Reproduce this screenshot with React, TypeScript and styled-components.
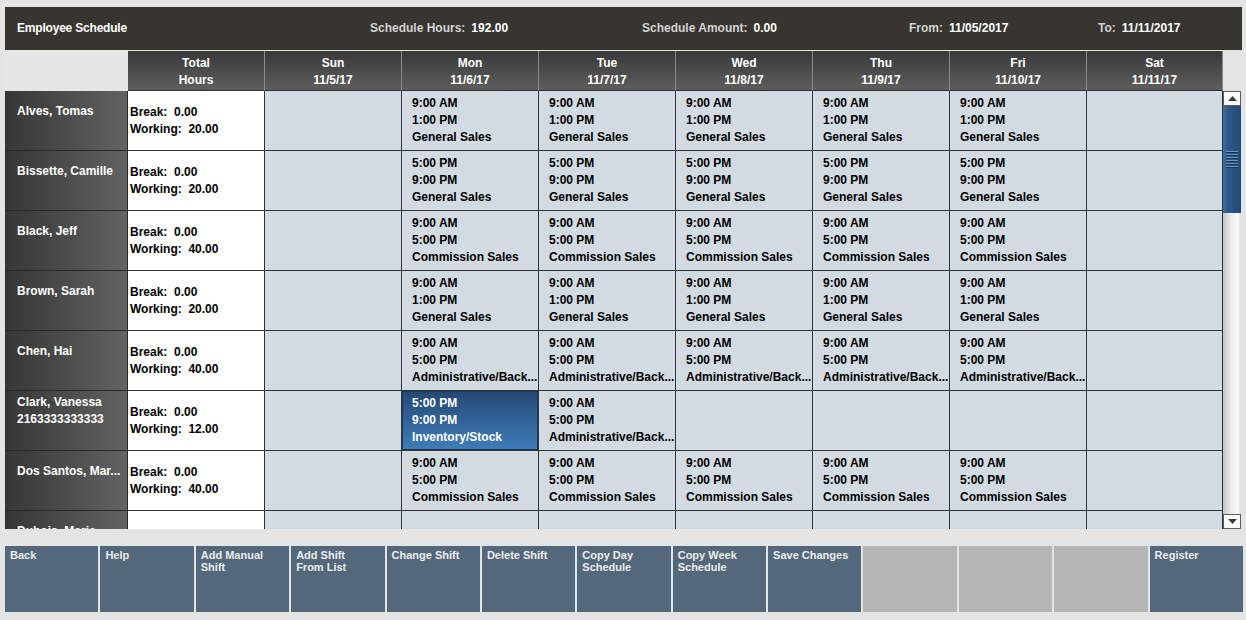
import React from "react";
import styled, { createGlobalStyle, css } from "styled-components";

const GlobalStyle = createGlobalStyle`
  html, body { margin: 0; padding: 0; background: #e4e4e4; }
  body { font-family: "Liberation Sans", Arial, sans-serif; }
  * { box-sizing: border-box; }
`;

const COLS = "123px repeat(7, 137px) 136px";

const Page = styled.div`
  width: 1246px;
  height: 620px;
  overflow: hidden;
  padding: 7px 0 0 5px;
  display: flex;
  flex-direction: column;
`;

const TopBar = styled.header`
  width: 1237px;
  height: 43px;
  flex-shrink: 0;
  background: #38342f;
  display: grid;
  grid-template-columns: 353px 272px 267px 189px 1fr;
  align-items: center;
  padding: 0 0 2px 12px;
  margin-bottom: 1px;
  color: #fff;
  font-weight: bold;
  font-size: 12px;
`;

const Title = styled.div`
  letter-spacing: -0.2px;
`;

const Stat = styled.div`
  display: flex;
  gap: 6px;
  white-space: nowrap;
`;

const StatLabel = styled.span`
  color: #d2d2d2;
`;

const StatValue = styled.span`
  color: #fff;
`;

const HeadRow = styled.div`
  display: grid;
  grid-template-columns: ${COLS};
  width: 1218px;
  height: 40px;
  flex-shrink: 0;
`;

const Corner = styled.div`
  background: #e6e6e6;
`;

const HeadCell = styled.div`
  background: linear-gradient(#393939, #5e5e5e);
  border-right: 1px solid #8a8a8a;
  border-bottom: 1px solid #2e2e2e;
  padding-top: 2px;
  color: #fff;
  font-size: 12px;
  font-weight: bold;
  line-height: 17px;
  display: flex;
  flex-direction: column;
  align-items: center;
  justify-content: center;
`;

const BodyArea = styled.div`
  display: flex;
  height: 438px;
  flex-shrink: 0;
`;

const BodyGrid = styled.div`
  width: 1218px;
  height: 438px;
  overflow: hidden;
  display: flex;
  flex-direction: column;
`;

const Row = styled.div`
  display: grid;
  grid-template-columns: ${COLS};
  height: 60px;
  flex-shrink: 0;
`;

const NameCell = styled.div`
  background: linear-gradient(to right, #363636, #626262);
  border-right: 1px solid #2a2a2a;
  border-bottom: 1px solid #2a2a2a;
  padding: 0 3px 19px 12px;
  display: flex;
  flex-direction: column;
  justify-content: center;
  color: #fff;
  font-size: 12px;
  font-weight: bold;
  line-height: 17px;
  white-space: nowrap;
  overflow: hidden;
`;

const TotalCell = styled.div`
  background: #fff;
  border-right: 1px solid #333;
  border-bottom: 1px solid #333;
  padding-left: 2px;
  display: flex;
  flex-direction: column;
  justify-content: center;
  color: #000;
  font-size: 12px;
  font-weight: bold;
  line-height: 17px;
  white-space: pre;
`;

const DayCell = styled.div<{ $selected?: boolean }>`
  background: #d3dbe2;
  border-right: 1px solid #333;
  border-bottom: 1px solid #333;
  padding: 4px 0 0 10px;
  color: #000;
  font-size: 12px;
  font-weight: bold;
  line-height: 17px;
  white-space: nowrap;
  overflow: hidden;
  display: flex;
  flex-direction: column;
  ${(p) =>
    p.$selected &&
    css`
      background: linear-gradient(#244873, #3f7dbb);
      box-shadow: inset 0 0 0 1px #1b3859;
      color: #fff;
    `}
`;

const ScrollBar = styled.div`
  width: 18px;
  height: 438px;
  display: flex;
  flex-direction: column;
  background: linear-gradient(to right, #c4c4c4, #ececec 45%, #fafafa 80%, #dedede);
`;

const ScrollBtn = styled.div`
  height: 15px;
  flex-shrink: 0;
  background: #fcfcfc;
  border: 1px solid #5c5c5c;
  display: flex;
  align-items: center;
  justify-content: center;
`;

const Thumb = styled.div`
  height: 107px;
  flex-shrink: 0;
  background: linear-gradient(to right, #3d6e9f, #2c5888 30%, #234b79);
  display: flex;
  align-items: center;
  justify-content: center;
`;

const Track = styled.div`
  flex: 1;
`;

const ButtonBar = styled.div`
  margin-top: 17px;
  width: 1238px;
  height: 66px;
  display: grid;
  grid-template-columns: repeat(13, 1fr);
  gap: 2px;
`;

const ActionButton = styled.div<{ $disabled?: boolean }>`
  background: ${(p) => (p.$disabled ? "#b5b5b5" : "#54687c")};
  color: #ececec;
  font-size: 11px;
  font-weight: bold;
  line-height: 12px;
  padding: 3px 5px 0 5px;
`;

type Shift = { start: string; end: string; role: string; selected?: boolean } | null;

type Emp = { name: string[]; working: string; shifts: Shift[] };

const gs = (s: string, e: string): Shift => ({ start: s, end: e, role: "General Sales" });
const cs: Shift = { start: "9:00 AM", end: "5:00 PM", role: "Commission Sales" };
const ad: Shift = { start: "9:00 AM", end: "5:00 PM", role: "Administrative/Back..." };

const employees: Emp[] = [
  { name: ["Alves, Tomas"], working: "20.00", shifts: [null, gs("9:00 AM", "1:00 PM"), gs("9:00 AM", "1:00 PM"), gs("9:00 AM", "1:00 PM"), gs("9:00 AM", "1:00 PM"), gs("9:00 AM", "1:00 PM"), null] },
  { name: ["Bissette, Camille"], working: "20.00", shifts: [null, gs("5:00 PM", "9:00 PM"), gs("5:00 PM", "9:00 PM"), gs("5:00 PM", "9:00 PM"), gs("5:00 PM", "9:00 PM"), gs("5:00 PM", "9:00 PM"), null] },
  { name: ["Black, Jeff"], working: "40.00", shifts: [null, cs, cs, cs, cs, cs, null] },
  { name: ["Brown, Sarah"], working: "20.00", shifts: [null, gs("9:00 AM", "1:00 PM"), gs("9:00 AM", "1:00 PM"), gs("9:00 AM", "1:00 PM"), gs("9:00 AM", "1:00 PM"), gs("9:00 AM", "1:00 PM"), null] },
  { name: ["Chen, Hai"], working: "40.00", shifts: [null, ad, ad, ad, ad, ad, null] },
  {
    name: ["Clark, Vanessa", "2163333333333"],
    working: "12.00",
    shifts: [null, { start: "5:00 PM", end: "9:00 PM", role: "Inventory/Stock", selected: true }, ad, null, null, null, null],
  },
  { name: ["Dos Santos, Mar..."], working: "40.00", shifts: [null, cs, cs, cs, cs, cs, null] },
  { name: ["Dubois, Marie"], working: "", shifts: [null, null, null, null, null, null, null] },
];

const days = [
  ["Total", "Hours"],
  ["Sun", "11/5/17"],
  ["Mon", "11/6/17"],
  ["Tue", "11/7/17"],
  ["Wed", "11/8/17"],
  ["Thu", "11/9/17"],
  ["Fri", "11/10/17"],
  ["Sat", "11/11/17"],
];

const buttons: { label: string[]; disabled?: boolean }[] = [
  { label: ["Back"] },
  { label: ["Help"] },
  { label: ["Add Manual", "Shift"] },
  { label: ["Add Shift", "From List"] },
  { label: ["Change Shift"] },
  { label: ["Delete Shift"] },
  { label: ["Copy Day", "Schedule"] },
  { label: ["Copy Week", "Schedule"] },
  { label: ["Save Changes"] },
  { label: [], disabled: true },
  { label: [], disabled: true },
  { label: [], disabled: true },
  { label: ["Register"] },
];

const Arrow = ({ up }: { up?: boolean }) => (
  <svg width="9" height="5" viewBox="0 0 9 5">
    <polygon points={up ? "4.5,0 9,5 0,5" : "0,0 9,0 4.5,5"} fill="#3c3c3c" />
  </svg>
);

const Grip = () => (
  <svg width="12" height="18" viewBox="0 0 12 18">
    {[0, 3, 6, 9, 12, 15].map((y) => (
      <g key={y}>
        <rect x="0" y={y} width="12" height="1" fill="#6d93bb" />
        <rect x="0" y={y + 1} width="12" height="1" fill="#17365a" />
      </g>
    ))}
  </svg>
);

export default function App() {
  return (
    <>
      <GlobalStyle />
      <Page>
        <TopBar>
          <Title>Employee Schedule</Title>
          <Stat>
            <StatLabel>Schedule Hours:</StatLabel>
            <StatValue>192.00</StatValue>
          </Stat>
          <Stat>
            <StatLabel>Schedule Amount:</StatLabel>
            <StatValue>0.00</StatValue>
          </Stat>
          <Stat>
            <StatLabel>From:</StatLabel>
            <StatValue>11/05/2017</StatValue>
          </Stat>
          <Stat>
            <StatLabel>To:</StatLabel>
            <StatValue>11/11/2017</StatValue>
          </Stat>
        </TopBar>
        <HeadRow>
          <Corner />
          {days.map((d) => (
            <HeadCell key={d[0]}>
              <span>{d[0]}</span>
              <span>{d[1]}</span>
            </HeadCell>
          ))}
        </HeadRow>
        <BodyArea>
          <BodyGrid>
            {employees.map((emp) => (
              <Row key={emp.name[0]}>
                <NameCell>
                  {emp.name.map((n) => (
                    <span key={n}>{n}</span>
                  ))}
                </NameCell>
                <TotalCell>
                  {emp.working && (
                    <>
                      <span>{"Break:  0.00"}</span>
                      <span>{`Working:  ${emp.working}`}</span>
                    </>
                  )}
                </TotalCell>
                {emp.shifts.map((s, i) => (
                  <DayCell key={i} $selected={s?.selected}>
                    {s && (
                      <>
                        <span>{s.start}</span>
                        <span>{s.end}</span>
                        <span>{s.role}</span>
                      </>
                    )}
                  </DayCell>
                ))}
              </Row>
            ))}
          </BodyGrid>
          <ScrollBar>
            <ScrollBtn>
              <Arrow up />
            </ScrollBtn>
            <Thumb>
              <Grip />
            </Thumb>
            <Track />
            <ScrollBtn>
              <Arrow />
            </ScrollBtn>
          </ScrollBar>
        </BodyArea>
        <ButtonBar>
          {buttons.map((b, i) => (
            <ActionButton key={i} $disabled={b.disabled}>
              {b.label.map((l) => (
                <div key={l}>{l}</div>
              ))}
            </ActionButton>
          ))}
        </ButtonBar>
      </Page>
    </>
  );
}
